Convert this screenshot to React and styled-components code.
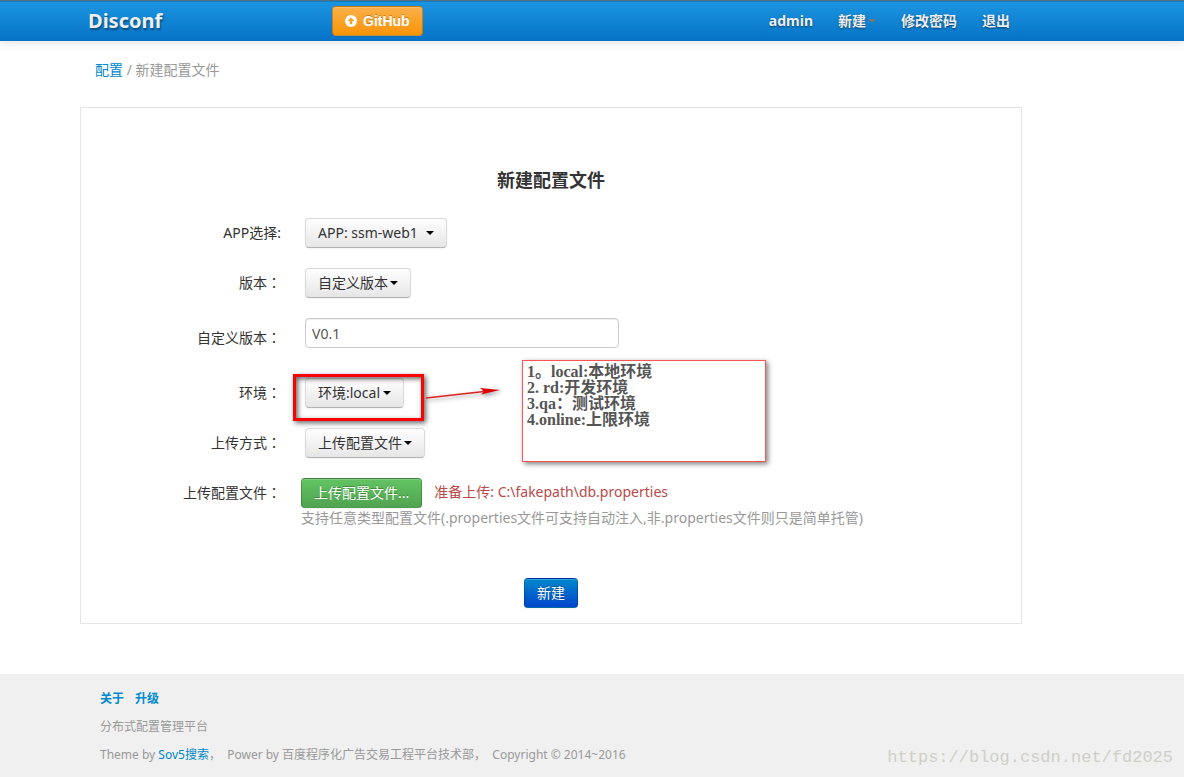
import React from "react";
import styled, { createGlobalStyle } from "styled-components";

const GlobalStyle = createGlobalStyle`
  * {
    box-sizing: border-box;
  }
  body {
    margin: 0;
    background: #fff;
    color: #333;
    font: 14px/20px "Noto Sans", "Noto Sans CJK SC", sans-serif;
  }
  a {
    color: #0088cc;
    text-decoration: none;
  }
  button,
  input,
  select {
    font: inherit;
  }
`;

function Caret({ color = "#000" }) {
  return (
    <svg width="8" height="4" viewBox="0 0 8 4" aria-hidden="true">
      <path d="M0 0H8L4 4Z" fill={color} />
    </svg>
  );
}

function Dropdown({ id, value, gap = 2, marked }) {
  return (
    <SelectBox $gap={gap}>
      <Select id={id} defaultValue={value}>
        <option>{value}</option>
      </Select>
      <Caret />
      {marked && <RedFrame />}
    </SelectBox>
  );
}

function Header() {
  return (
    <Navbar>
      <Brand href="#">Disconf</Brand>
      <GitHubLink href="#">
        <svg width="12" height="12" viewBox="0 0 12 12" aria-hidden="true">
          <circle cx="6" cy="6" r="6" fill="#fff" />
          <path d="M6 2.5L9.5 6H7.2V9.3H4.8V6H2.5Z" fill="#f9a123" />
        </svg>
        GitHub
      </GitHubLink>
      <Nav>
        <NavLink href="#">admin</NavLink>
        <NavMenu type="button">
          新建
          <Caret color="#777" />
        </NavMenu>
        <NavLink href="#">修改密码</NavLink>
        <NavLink href="#">退出</NavLink>
      </Nav>
    </Navbar>
  );
}

function Annotation() {
  return (
    <>
      <Arrow width="80" height="20" viewBox="0 0 80 20" aria-hidden="true">
        <path d="M2 13L60 6.5" stroke="#d22" strokeWidth="1.4" />
        <path d="M56 3L76 5L57 9.5L60 6.5Z" fill="#e00000" />
      </Arrow>
      <Note>
        <div>1。local:本地环境</div>
        <div>2. rd:开发环境</div>
        <div>3.qa：测试环境</div>
        <div>4.online:上限环境</div>
      </Note>
    </>
  );
}

function NewConfigForm() {
  return (
    <Panel onSubmit={(e) => e.preventDefault()}>
      <Title>新建配置文件</Title>
      <Row>
        <Label htmlFor="app">APP选择:</Label>
        <Dropdown id="app" value="APP: ssm-web1" gap={8} />
      </Row>
      <Row>
        <Label htmlFor="version">
          版本<Colon>：</Colon>
        </Label>
        <Dropdown id="version" value="自定义版本" />
      </Row>
      <Row>
        <Label htmlFor="custom">
          自定义版本<Colon>：</Colon>
        </Label>
        <TextInput id="custom" type="text" defaultValue="V0.1" />
      </Row>
      <Row>
        <Label htmlFor="env">
          环境<Colon>：</Colon>
        </Label>
        <Dropdown id="env" value="环境:local" marked />
        <Annotation />
      </Row>
      <Row>
        <Label htmlFor="mode">
          上传方式<Colon>：</Colon>
        </Label>
        <Dropdown id="mode" value="上传配置文件" />
      </Row>
      <UploadRow>
        <Label htmlFor="upload">
          上传配置文件<Colon>：</Colon>
        </Label>
        <Upload>
          <UploadLine>
            <UploadButton id="upload" type="button">
              上传配置文件...
            </UploadButton>
            <Pending>准备上传: C:\fakepath\db.properties</Pending>
          </UploadLine>
          <Help>
            支持任意类型配置文件(.properties文件可支持自动注入,非.properties文件则只是简单托管)
          </Help>
        </Upload>
      </UploadRow>
      <Submit type="submit">新建</Submit>
    </Panel>
  );
}

function App() {
  return (
    <>
      <GlobalStyle />
      <Header />
      <Breadcrumb>
        <a href="#">配置</a> / 新建配置文件
      </Breadcrumb>
      <NewConfigForm />
      <Footer>
        <FooterLinks>
          <a href="#">关于</a>
          <a href="#">升级</a>
        </FooterLinks>
        <div>分布式配置管理平台</div>
        <FooterLine>
          <div>
            Theme by <a href="#">Sov5搜索</a>，&nbsp; Power by
            百度程序化广告交易工程平台技术部，&nbsp; Copyright © 2014~2016
          </div>
          <Watermark>https://blog.csdn.net/fd2025</Watermark>
        </FooterLine>
      </Footer>
    </>
  );
}

const Navbar = styled.header`
  display: flex;
  align-items: center;
  height: 41px;
  padding: 0 174px 0 88px;
  border-top: 1px solid #56707f;
  background: linear-gradient(#0a5ea6 0, #1b95e0 1px, #0672c6 100%);
  box-shadow: 0 1px 10px rgba(0, 0, 0, 0.15);
`;
const Brand = styled.a`
  width: 244px;
  color: #eee;
  font-size: 20px;
  font-weight: 700;
  text-shadow: 1px 2px 2px rgba(0, 0, 0, 0.4);
`;
const Button = styled.button`
  height: 30px;
  padding: 4px 12px;
  border: 1px solid rgba(0, 0, 0, 0.2);
  border-radius: 4px;
  color: #fff;
  text-shadow: 0 -1px 0 rgba(0, 0, 0, 0.25);
  box-shadow: inset 0 1px 0 rgba(255, 255, 255, 0.2),
    0 1px 2px rgba(0, 0, 0, 0.05);
  white-space: nowrap;
`;
const GitHubLink = styled(Button).attrs({ as: "a" })`
  display: flex;
  align-items: center;
  gap: 6px;
  background: linear-gradient(#fbb04a, #f89406);
  font-family: "Liberation Sans", sans-serif;
  font-weight: 700;
`;
const Nav = styled.nav`
  display: flex;
  gap: 25px;
  margin-left: auto;
`;
const NavLink = styled.a`
  color: #eee;
  font-weight: 700;
  text-shadow: 0 1px 2px rgba(0, 0, 0, 0.5);
`;
const NavMenu = styled(NavLink).attrs({ as: "button" })`
  display: flex;
  align-items: center;
  gap: 2px;
  padding: 0;
  border: 0;
  background: none;
`;
const Breadcrumb = styled.div`
  padding: 19px 95px 0;
  color: #999;
`;
const Panel = styled.form`
  display: flex;
  flex-direction: column;
  gap: 20px;
  margin: 27px 162px 50px 80px;
  padding: 62px 0 15px;
  border: 1px solid #e5e5e5;
`;
const Title = styled.h1`
  margin: 0 0 8px;
  font-size: 18px;
  line-height: 20px;
  text-align: center;
`;
const Row = styled.div`
  position: relative;
  display: flex;
  align-items: center;
  gap: 24px;
`;
const UploadRow = styled(Row)`
  align-items: flex-start;
  gap: 20px;
`;
const Label = styled.label`
  flex: none;
  width: 200px;
  line-height: 30px;
  text-align: right;
`;
/* full-width colon centred in its box */
const Colon = styled.span`
  font-family: "Noto Sans CJK TC", sans-serif;
  line-height: 1;
`;
const SelectBox = styled.div`
  position: relative;
  display: flex;
  align-items: center;
  gap: ${(p) => p.$gap}px;
  height: 30px;
  padding: 0 12px;
  border: 1px solid #ccc;
  border-color: #d9d9d9 #d9d9d9 #b3b3b3;
  border-radius: 4px;
  background: linear-gradient(#fff, #e6e6e6);
  box-shadow: 0 1px 2px rgba(0, 0, 0, 0.05);
`;
const Select = styled.select`
  padding: 0;
  border: 0;
  appearance: none;
  background: none;
  color: #333;
`;
const TextInput = styled.input`
  width: 314px;
  height: 30px;
  margin-bottom: 10px;
  padding: 4px 6px;
  border: 1px solid #ccc;
  border-radius: 4px;
  color: #555;
  box-shadow: inset 0 1px 1px rgba(0, 0, 0, 0.075);
`;
/* marks drawn over the form */
const RedFrame = styled.div`
  position: absolute;
  top: -5px;
  left: -13px;
  width: 131px;
  height: 47px;
  border: 3px solid #f00;
  box-shadow: 2px 2px 5px rgba(0, 0, 0, 0.6),
    inset 2px 2px 5px rgba(0, 0, 0, 0.6);
  pointer-events: none;
`;
const Arrow = styled.svg`
  position: absolute;
  top: 7px;
  left: 343px;
  filter: drop-shadow(2px 2px 2px rgba(0, 0, 0, 0.4));
`;
const Note = styled.div`
  position: absolute;
  top: -18px;
  left: 441px;
  width: 244px;
  height: 102px;
  padding: 3px 4px;
  border: 1px solid #f55;
  background: #fff;
  box-shadow: 2px 2px 5px rgba(0, 0, 0, 0.5);
  color: #555;
  font: 700 16px/16px "Liberation Serif", "Noto Sans CJK SC", serif;
`;
const Upload = styled.div`
  flex: 1;
`;
const UploadLine = styled.div`
  display: flex;
  gap: 12px;
`;
const UploadButton = styled(Button)`
  background: linear-gradient(#62c462, #51a351);
`;
const Pending = styled.span`
  line-height: 28px;
  color: #b94a48;
`;
const Help = styled.div`
  color: #999;
`;
const Submit = styled(Button)`
  align-self: center;
  margin-top: 30px;
  background: linear-gradient(#0088cc, #0044cc);
`;
const Footer = styled.footer`
  display: flex;
  flex-direction: column;
  gap: 8px;
  padding: 15px 11px 12px 100px;
  background: #f0f0f0;
  color: #999;
  font-size: 12px;
`;
const FooterLinks = styled.div`
  display: flex;
  gap: 11px;
  font-weight: 700;
`;
const FooterLine = styled.div`
  display: flex;
  justify-content: space-between;
`;
const Watermark = styled.div`
  color: #cfcfc8;
  font: 17px/25px "Liberation Mono", monospace;
`;

export default App;
